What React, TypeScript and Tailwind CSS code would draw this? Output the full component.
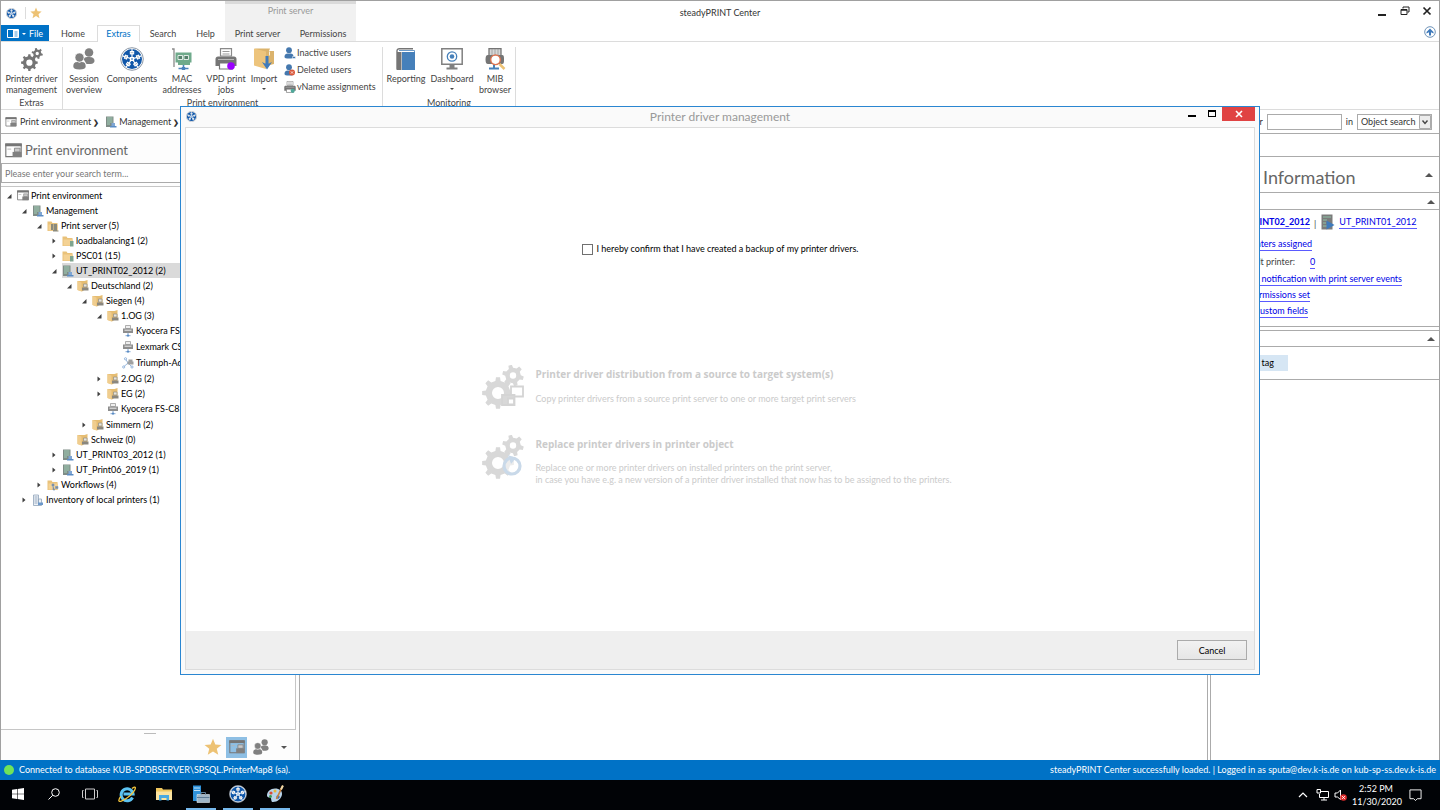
import React from 'react';
import clsx from 'clsx';

type IconProps = { className?: string };

function gearPath(cx: number, cy: number, outer: number, inner: number, hole: number, teeth: number, turn = 0) {
  const step = (Math.PI * 2) / teeth;
  const at = (r: number, a: number) => `${(cx + r * Math.cos(a)).toFixed(2)} ${(cy + r * Math.sin(a)).toFixed(2)}`;
  let d = '';
  for (let i = 0; i < teeth; i++) {
    const a = i * step + turn;
    d += `${i === 0 ? 'M' : 'L'}${at(inner, a - step * 0.27)} L${at(outer, a - step * 0.16)} L${at(outer, a + step * 0.16)} L${at(inner, a + step * 0.27)} `;
  }
  d += `Z M${cx - hole} ${cy} a${hole} ${hole} 0 1 0 ${hole * 2} 0 a${hole} ${hole} 0 1 0 ${-hole * 2} 0 Z`;
  return d;
}

const bigGear = gearPath(16, 28, 16, 12.4, 6, 8, 0);
const smallGear = gearPath(31, 10.5, 10.8, 7.8, 3.2, 6, 0.25);

function GearsIcon({ className }: IconProps) {
  return (
    <svg viewBox="0 0 42 44" className={className} fill="currentColor" fillRule="evenodd" strokeLinejoin="round">
      <path d={bigGear} />
      <path d={smallGear} />
    </svg>
  );
}

function WheelIcon({ className }: IconProps) {
  return (
    <svg viewBox="0 0 24 24" className={className}>
      <circle cx="12" cy="12" r="11.3" fill="#fff" stroke="#8d98a5" strokeWidth="1" />
      <circle cx="12" cy="12" r="10" fill="#0f56a8" />
      {[0, 72, 144, 216, 288].map((angle) => (
        <g key={angle} transform={`rotate(${angle} 12 12)`}>
          <path d="M12 12V2" stroke="#fff" strokeWidth="1.2" />
          <path d="M9.8 4h4.4v3.400H9.800z" fill="#fff" />
          <path d="M10.6 5.700h2.8" stroke="#8d98a5" strokeWidth=".7" />
        </g>
      ))}
      <path d="M9.800 10h4.400v4H9.800z" fill="#fff" />
      <path d="M11 12h2" stroke="#0f56a8" strokeWidth=".9" />
    </svg>
  );
}

function StarIcon({ className }: IconProps) {
  return (
    <svg viewBox="0 0 24 24" className={className} fill="#edc274">
      <path d="M12 1l3.1 7.6 8.2.6-6.3 5.2 2 8-7-4.4-7 4.4 2-8L.7 9.200l8.200-.6z" />
    </svg>
  );
}

function UsersIcon({ className }: IconProps) {
  return (
    <svg viewBox="0 0 22 22" className={className} fill="#808080">
      <circle cx="16" cy="4.500" r="4.300" />
      <path d="M10.500 11c1-2 3-2 5.500-2s5.500.5 5.500 4c0 1.500-1.500 3-4 3h-4z" />
      <circle cx="6.500" cy="9.500" r="4.500" stroke="#fff" strokeWidth=".6" />
      <path d="M.3 18.500c0-4 2.500-4.500 4.200-4.500l2 .7 2-.7c2 0 4.200.5 4.200 4.500 0 2-2 3-6.200 3s-6.200-1-6.200-3z" />
    </svg>
  );
}

function CardIcon({ className }: IconProps) {
  return (
    <svg viewBox="0 0 20 22" className={className}>
      <path d="M0 1h2v18" stroke="#8a8a8a" strokeWidth="1.300" fill="none" />
      <path d="M3.500 4.500h16v10H18V17H6v-2.500H3.500z" fill="#6faa8b" />
      <path d="M6 7.500h4.500v4H6zM12 7.500h4.500v4H12z" fill="#55806b" stroke="#fff" strokeWidth=".8" />
      <path d="M11.500 17v3M6.500 20.500h10" stroke="#4a82bd" strokeWidth="1.600" />
      <path d="M9.800 19h3.400v3H9.800z" fill="#4a82bd" />
    </svg>
  );
}

function PrinterIcon({ className, dot }: IconProps & { dot?: string }) {
  return (
    <svg viewBox="0 0 22 22" className={className}>
      <path d="M5.500 .7h11V8h-11z" fill="#fff" stroke="#8a8a8a" strokeWidth="1.200" />
      <path d="M7.500 3.500h7M7.500 6h7" stroke="#9a9a9a" strokeWidth="1.200" />
      <path d="M3 8.500h16c1.500 0 2.500 1 2.500 2.500v7H.5v-7c0-1.500 1-2.500 2.500-2.500z" fill="#757575" />
      <path d="M3 11.500h16" stroke="#c9c9c9" strokeWidth=".8" />
      <path d="M4.500 15h13v6h-13z" fill="#fff" stroke="#757575" strokeWidth="1.200" />
      {dot && <circle cx="16" cy="18" r="3.800" fill={dot} />}
    </svg>
  );
}

function ImportIcon({ className }: IconProps) {
  return (
    <svg viewBox="0 0 20 22" className={className}>
      <path d="M1 .5h15l-1 2.500H20V16l-8 2z" fill="#dbb36c" />
      <path d="M0 .5L12 3.500V21L0 17.500z" fill="#edc47c" />
      <path d="M15.500 3.500v4" stroke="#fff" strokeWidth=".8" />
      <path d="M13 8v9" stroke="#3f7abb" strokeWidth="3" />
      <path d="M8 14l5 7.500 5-7.500-3 1.500h-4z" fill="#3f7abb" />
    </svg>
  );
}

function BookIcon({ className }: IconProps) {
  return (
    <svg viewBox="0 0 20 22" className={className}>
      <path d="M5 22H2.500C1.500 22 1 21.500 1 20.500V3C1 1.500 2 .7 3.500.7H17" fill="none" stroke="#757575" strokeWidth="1.400" />
      <path d="M1 4h4.500v18H2.500C1.500 22 1 21.500 1 20.500z" fill="#757575" />
      <path d="M6 4h13v18H6z" fill="#4680ba" />
      <path d="M3 2.500h15.500V22" fill="none" stroke="#4680ba" strokeWidth=".8" />
    </svg>
  );
}

function MonitorIcon({ className }: IconProps) {
  return (
    <svg viewBox="0 0 22 22" className={className}>
      <path d="M.8.800h20.400v15.400H.8z" fill="#fff" stroke="#808080" strokeWidth="1.500" />
      <circle cx="11" cy="8.500" r="4.700" fill="none" stroke="#4680ba" strokeWidth="1.300" />
      <circle cx="11" cy="8.500" r="2.300" fill="#4680ba" />
      <path d="M8.500 17h5v2.500h3V21.500h-11v-2h3z" fill="#808080" />
    </svg>
  );
}

function BrowserIcon({ className }: IconProps) {
  return (
    <svg viewBox="0 0 22 22" className={className}>
      <path d="M5 .7h12V8H5z" fill="#d6d6d6" stroke="#757575" strokeWidth="1.300" />
      <path d="M8 1v6M11 1v6M14 1v6" stroke="#999" strokeWidth=".8" />
      <path d="M4 7h14c2 0 2 2 2 4.500S20 16 18 16H4c-2 0-2.500-2-2.500-4.500S2 7 4 7z" fill="#757575" />
      <path d="M10 16v4M5 20.500h10" stroke="#4680ba" strokeWidth="2" />
      <path d="M15.500 16l5 5" stroke="#edc274" strokeWidth="2.500" />
      <circle cx="11.500" cy="11.800" r="4.800" fill="#fff" stroke="#de7350" strokeWidth="1.400" />
    </svg>
  );
}

function UserIcon({ className, deleted }: IconProps & { deleted?: boolean }) {
  return (
    <svg viewBox="0 0 12 12" className={className}>
      <circle cx="5" cy="3.200" r="2.900" fill="#4578ae" />
      <path d="M.5 10c0-3 2-3.500 3.500-3.500h2c2 0 3.500.5 3.500 3.500 0 1-1.500 1.500-4.500 1.500S.5 11 .5 10z" fill="#4578ae" />
      {deleted ? (
        <>
          <circle cx="8" cy="8.500" r="3" fill="#d9573a" />
          <path d="M6.800 7.300l2.400 2.400M9.200 7.300L6.800 9.700" stroke="#fff" strokeWidth=".7" />
        </>
      ) : (
        <path d="M8.500 9.500h3v2h-3z" fill="#4578ae" stroke="#fff" strokeWidth=".5" />
      )}
    </svg>
  );
}

function EnvironmentIcon({ className }: IconProps) {
  return (
    <svg viewBox="0 0 18 16" className={className}>
      <path d="M.8 1h16.400v13.500H.8z" fill="none" stroke="#757575" strokeWidth="1.200" />
      <path d="M.2.500h17.600V3.500H.2z" fill="#757575" />
      <path d="M2.500 6.500h4" stroke="#b5b5b5" strokeWidth="1" />
      <path d="M10 5.500h6v4h-6z" fill="#c8c8c8" stroke="#808080" strokeWidth=".9" />
      <path d="M8 9.500h9.500v5.500H8z" fill="#808080" />
    </svg>
  );
}

function ServerIcon({ className }: IconProps) {
  return (
    <svg viewBox="0 0 12 12" className={className}>
      <path d="M1 .500h7.500v10.500H1z" fill="#7f8c86" />
      <path d="M2 2h5.500M2 4h5.500M2 6h5.500M2 8h3" stroke="#a2d0b8" strokeWidth="1" />
      <path d="M6.500 7h3.500v3H6.500z" fill="#7fa6d4" />
      <path d="M5 10h6.500v1.500H5z" fill="#5b8cc4" />
    </svg>
  );
}

function FolderIcon({ className, mark }: IconProps & { mark: 'server' | 'stack' | 'flow' }) {
  return (
    <svg viewBox="0 0 12 12" className={className}>
      <path d="M.5 1.500h4l1 1.500h5v8H.5z" fill="#e9c27a" />
      <path d="M1.500 4.500h9.500v6h-9.500z" fill="#f4d294" />
      {mark === 'server' && <path d="M8 6h3.500v5.500H8z" fill="#7fa58f" />}
      {mark === 'stack' && <path d="M4 4h2.500v6H4zM7 4h3v6.500h1.500v1H6V10h1z" fill="#8a8a7c" />}
      {mark === 'flow' && <path d="M5 5h2v2H5zM8.500 7.500h2.500v2H8.500zM6 7v4h2" fill="#8a8a8a" stroke="#6b98cb" strokeWidth=".6" />}
    </svg>
  );
}

function BoxIcon({ className }: IconProps) {
  return (
    <svg viewBox="0 0 12 12" className={className}>
      <path d="M.5 1h7L10.500 0v8L5 11.500.5 10z" fill="#e6bd72" />
      <path d="M.5 1l4 1.500v9L.5 10z" fill="#f0cd8e" />
      <path d="M6.500 4h3.500v3H6.500z" fill="#e8e4da" stroke="#9a9488" strokeWidth=".8" />
      <path d="M5 7.500h6.500v3H5z" fill="#8a877f" />
    </svg>
  );
}

function NetPrinterIcon({ className, pool }: IconProps & { pool?: boolean }) {
  if (pool) {
    return (
      <svg viewBox="0 0 12 12" className={className}>
        <path d="M3.500 2L6 6M6 6l-4.500 4M6 6l4 4" stroke="#7fa6d4" strokeWidth=".8" />
        <circle cx="3.500" cy="1.800" r="1.100" fill="#fff" stroke="#7fa6d4" strokeWidth=".8" />
        <circle cx="1.700" cy="10" r="1.100" fill="#fff" stroke="#7fa6d4" strokeWidth=".8" />
        <circle cx="10" cy="10" r="1.100" fill="#fff" stroke="#7fa6d4" strokeWidth=".8" />
        <path d="M6.500 2.500h4v2h-4zM5.500 4.500h6v3h-6z" fill="#a0a0a0" />
      </svg>
    );
  }
  return (
    <svg viewBox="0 0 12 12" className={className}>
      <path d="M3.500.5h5v3h-5z" fill="#eee" stroke="#9a9a9a" strokeWidth=".8" />
      <path d="M1 3.500h10V8H1z" fill="#8d8d8d" />
      <path d="M2.500 5.200h7" stroke="#e6e6e6" strokeWidth="1.100" />
      <path d="M6 8v2M3.500 10.700h5" stroke="#7fa6d4" strokeWidth="1" />
      <path d="M5 9.700h2v1.800H5z" fill="#5b8cc4" />
    </svg>
  );
}

function BuildingIcon({ className }: IconProps) {
  return (
    <svg viewBox="0 0 12 12" className={className}>
      <path d="M1.500 11.500V1h5v10.500zM6.500 5h3v6.500h-3z" fill="#eef2f7" stroke="#8fa3ba" strokeWidth=".8" />
      <path d="M2.500 3h3M2.500 5h3M2.500 7h3M2.500 9h3" stroke="#8fa3ba" strokeWidth=".9" />
      <path d="M6 8.500h5v2.500H6z" fill="#6b98cb" />
    </svg>
  );
}

const treeIcons = {
  environment: <EnvironmentIcon className="w-3 h-[11px]" />,
  server: <ServerIcon className="size-3" />,
  folderStack: <FolderIcon className="size-3" mark="stack" />,
  folderServer: <FolderIcon className="size-3" mark="server" />,
  folderFlow: <FolderIcon className="size-3" mark="flow" />,
  box: <BoxIcon className="size-3" />,
  printer: <NetPrinterIcon className="size-3" />,
  pool: <NetPrinterIcon className="size-3" pool />,
  building: <BuildingIcon className="size-3" />,
};

type TreeNode = {
  label: string;
  icon: keyof typeof treeIcons;
  children?: TreeNode[];
  collapsed?: boolean;
  selected?: boolean;
};

const tree: TreeNode[] = [
  {
    label: 'Print environment',
    icon: 'environment',
    children: [
      {
        label: 'Management',
        icon: 'server',
        children: [
          {
            label: 'Print server (5)',
            icon: 'folderStack',
            children: [
              { label: 'loadbalancing1 (2)', icon: 'folderServer', collapsed: true },
              { label: 'PSC01 (15)', icon: 'folderServer', collapsed: true },
              {
                label: 'UT_PRINT02_2012 (2)',
                icon: 'server',
                selected: true,
                children: [
                  {
                    label: 'Deutschland (2)',
                    icon: 'box',
                    children: [
                      {
                        label: 'Siegen (4)',
                        icon: 'box',
                        children: [
                          {
                            label: '1.OG (3)',
                            icon: 'box',
                            children: [
                              { label: 'Kyocera FS-C8525', icon: 'printer' },
                              { label: 'Lexmark CS510', icon: 'printer' },
                              { label: 'Triumph-Adler', icon: 'pool' },
                            ],
                          },
                          { label: '2.OG (2)', icon: 'box', collapsed: true },
                          { label: 'EG (2)', icon: 'box', collapsed: true },
                          { label: 'Kyocera FS-C8525', icon: 'printer' },
                        ],
                      },
                      { label: 'Simmern (2)', icon: 'box', collapsed: true },
                    ],
                  },
                  { label: 'Schweiz (0)', icon: 'box' },
                ],
              },
              { label: 'UT_PRINT03_2012 (1)', icon: 'server', collapsed: true },
              { label: 'UT_Print06_2019 (1)', icon: 'server', collapsed: true },
            ],
          },
          { label: 'Workflows (4)', icon: 'folderFlow', collapsed: true },
        ],
      },
      { label: 'Inventory of local printers (1)', icon: 'building', collapsed: true },
    ],
  },
];

function TreeItem({ node }: { node: TreeNode }) {
  const isPrinter = node.icon === 'printer' || node.icon === 'pool';
  return (
    <li>
      <div className={clsx('flex items-center gap-1', isPrinter ? 'h-4' : 'h-[15px]')}>
        <span className="w-2 shrink-0">
          {node.collapsed && (
            <svg viewBox="0 0 8 8" className="size-2"><path d="M2.500 1.500l3 2.500-3 2.500z" fill="#404040" /></svg>
          )}
          {node.children && (
            <svg viewBox="0 0 8 8" className="size-2"><path d="M6.500 2v4.500H2z" fill="#404040" /></svg>
          )}
        </span>
        <span className={clsx('flex flex-1 items-center gap-[2px] self-stretch whitespace-nowrap', node.selected && 'bg-[#dadada]')}>
          {treeIcons[node.icon]}
          <span>{node.label}</span>
        </span>
      </div>
      {node.children && (
        <ul className="pl-[15px]">
          {node.children.map((child) => (
            <TreeItem key={child.label} node={child} />
          ))}
        </ul>
      )}
    </li>
  );
}

function RibbonButton({ icon, label, width, menu }: { icon: React.ReactNode; label: string; width: string; menu?: boolean }) {
  return (
    <button className={clsx('flex flex-col items-center', width)}>
      <span className="flex h-6 items-center justify-center">{icon}</span>
      <span className="mt-[2px] whitespace-pre text-center leading-[11px]">{label}</span>
      {menu && <span className="mt-1 border-x-2 border-t-2 border-x-transparent border-t-[#444]" />}
    </button>
  );
}

function RibbonGroup({ title, children }: { title: string; children: React.ReactNode }) {
  return (
    <section className="flex flex-col border-r border-[#dcdcdc]">
      <div className="flex h-[51px]">{children}</div>
      <h2 className="text-center leading-3">{title}</h2>
    </section>
  );
}

function TitleBar() {
  return (
    <header className="grid grid-cols-[1fr_auto_1fr] border-b border-[#dcdcdc]">
      <div>
        <div className="flex h-6 items-center">
          <WheelIcon className="ml-[5px] size-[11px]" />
          <span className="ml-2 h-3 border-l border-[#dcdcdc]" />
          <StarIcon className="ml-1 size-3" />
        </div>
        <nav className="flex h-4 text-[#444]">
          <button className="flex w-12 items-center justify-center gap-[3px] bg-[#0072c6] pt-px text-white">
            <svg viewBox="0 0 12 9" className="h-[9px] w-3">
              <path d="M.5.500h11v8H.5z" fill="none" stroke="#fff" />
              <path d="M6 .5h5.500v8H6z" fill="#fff" />
              <path d="M7.500 3h3M7.500 5h3M7.500 7h3" stroke="#0072c6" strokeWidth=".7" />
            </svg>
            <span className="border-x-2 border-t-2 border-x-transparent border-t-white" />
            File
          </button>
          <button className="w-12 pt-px">Home</button>
          <button className="-mb-px w-[43px] border border-b-0 border-[#dcdcdc] bg-white text-[#0072c6]">Extras</button>
          <button className="w-[46px] pt-px">Search</button>
          <button className="w-[39px] pt-px">Help</button>
        </nav>
      </div>
      <h1 className="self-start pt-[6px] text-[#333]">steadyPRINT Center</h1>
      <div className="flex flex-col items-end gap-[5px] pr-[3px]">
        <div className="flex h-5 items-center gap-3 text-black">
          <button aria-label="Minimize" className="flex size-[10px] items-end">
            <span className="h-[2px] w-2 bg-[#222]" />
          </button>
          <button aria-label="Restore">
            <svg viewBox="0 0 10 10" className="size-[10px]" fill="none" stroke="#222">
              <path d="M3 2.500V1h6v5H7.500" />
              <path d="M1 3.500h6v5H1z" />
              <path d="M1 4h6" strokeWidth="1.500" />
            </svg>
          </button>
          <button aria-label="Close" className="mr-1">
            <svg viewBox="0 0 10 10" className="size-[10px]" stroke="#222" strokeWidth="1.700">
              <path d="M1.500 1.500l7 7M8.500 1.500l-7 7" />
            </svg>
          </button>
        </div>
        <button aria-label="Collapse ribbon">
          <svg viewBox="0 0 12 12" className="size-3">
            <circle cx="6" cy="6" r="5.300" fill="#fff" stroke="#6e93b8" />
            <path d="M6 2.500L9.500 6v1.500L7 6.200V9.500H5V6.200L2.500 7.500V6z" fill="#3f7abb" />
          </svg>
        </button>
      </div>
    </header>
  );
}

function ContextTabs() {
  return (
    <div className="absolute left-[225px] top-px flex h-10 w-[131px] flex-col border-t-[3px] border-[#dadada] bg-[#f1f1f1] text-[#444]">
      <p className="text-center leading-[14px] text-[#999]">Print server</p>
      <div className="mt-auto flex h-4">
        <button className="w-[65px] pt-px">Print server</button>
        <button className="w-[66px] pt-px">Permissions</button>
      </div>
    </div>
  );
}

function Ribbon() {
  return (
    <div className="flex h-[68px] border-b border-[#dcdcdc] pt-[5px] text-[#444]">
      <RibbonGroup title="Extras">
        <RibbonButton width="w-[61px]" icon={<GearsIcon className="h-[23px] w-[22px] text-[#757575]" />} label={'Printer driver\nmanagement'} />
      </RibbonGroup>
      <RibbonGroup title="Print environment">
        <RibbonButton width="w-[42px]" icon={<UsersIcon className="size-[22px]" />} label={'Session\noverview'} />
        <RibbonButton width="w-[54px]" icon={<WheelIcon className="size-6" />} label="Components" />
        <RibbonButton width="w-[46px]" icon={<CardIcon className="h-[22px] w-5" />} label={'MAC\naddresses'} />
        <RibbonButton width="w-[42px]" icon={<PrinterIcon className="size-[22px]" dot="#9a00ff" />} label={'VPD print\njobs'} />
        <RibbonButton width="w-[34px]" icon={<ImportIcon className="h-[22px] w-5" />} label="Import" menu />
        <div className="flex w-[101px] flex-col gap-[5px] whitespace-nowrap pl-[3px]">
          <button className="flex h-3 items-center gap-px"><UserIcon className="size-3" />Inactive users</button>
          <button className="flex h-3 items-center gap-px"><UserIcon className="size-3" deleted />Deleted users</button>
          <button className="flex h-3 items-center gap-px"><PrinterIcon className="size-3" dot="#4fa89a" />vName assignments</button>
        </div>
      </RibbonGroup>
      <RibbonGroup title="Monitoring">
        <RibbonButton width="w-[46px]" icon={<BookIcon className="h-[22px] w-5" />} label="Reporting" />
        <RibbonButton width="w-[46px]" icon={<MonitorIcon className="size-[22px]" />} label="Dashboard" menu />
        <RibbonButton width="w-10" icon={<BrowserIcon className="size-[22px]" />} label={'MIB\nbrowser'} />
      </RibbonGroup>
    </div>
  );
}

function LocationBar() {
  return (
    <div className="flex h-6 items-center justify-between border-b border-[#ababab] pl-1 pr-[7px] text-[#333]">
      <nav className="flex items-center">
        <EnvironmentIcon className="mr-[3px] h-[10px] w-3" />
        <a href="#environment">Print environment</a>
        <span className="ml-[2px] mr-[6px] text-[7px] font-bold">❯</span>
        <ServerIcon className="mr-[2px] size-3" />
        <a href="#management">Management</a>
        <span className="ml-[2px] text-[7px] font-bold">❯</span>
      </nav>
      <div className="flex items-center gap-1">
        <label htmlFor="object-term">Search for</label>
        <input id="object-term" className="h-4 w-[75px] border border-[#ababab] bg-white px-1" />
        <label htmlFor="object-scope">in</label>
        <div className="relative">
          <select id="object-scope" className="h-4 w-[75px] appearance-none border border-[#ababab] bg-white pl-[3px]">
            <option>Object search</option>
          </select>
          <svg viewBox="0 0 12 14" className="pointer-events-none absolute right-px top-px h-[14px] w-3">
            <path d="M.5.500h11v13H.5z" fill="#ececec" stroke="#ababab" />
            <path d="M3.500 5.500L6 8.500l2.500-3" fill="none" stroke="#444" strokeWidth="1.400" />
          </svg>
        </div>
      </div>
    </div>
  );
}

function Sidebar() {
  return (
    <aside className="flex w-[299px] flex-col border-r border-[#ababab] bg-[#fdfdfd]">
      <h2 className="flex h-[29px] items-center gap-[3px] pl-1 pt-[3px] text-[13px] text-[#666]">
        <EnvironmentIcon className="h-[15px] w-[17px]" />
        Print environment
      </h2>
      <input
        aria-label="Search"
        placeholder="Please enter your search term..."
        className="mr-[3px] h-5 border border-[#ababab] bg-white pl-[3px] placeholder:text-[#777]"
      />
      <div className="mr-[3px] mt-[3px] flex-1 overflow-hidden border border-l-0 border-[#c6c6c6] bg-white pt-px text-black">
        <ul className="pl-1">
          {tree.map((node) => (
            <TreeItem key={node.label} node={node} />
          ))}
        </ul>
      </div>
      <div className="mx-auto mt-[3px] w-3 border-t border-[#bbb]" />
      <div className="flex h-[26px] items-center justify-end gap-1 pr-3">
        <button aria-label="Favourites"><StarIcon className="size-[18px]" /></button>
        <button aria-label="Print environment" className="flex size-[21px] items-center justify-center bg-[#8ebfe4]">
          <EnvironmentIcon className="h-[14px] w-4" />
        </button>
        <button aria-label="Users" className="ml-[2px]"><UsersIcon className="size-4" /></button>
        <button aria-label="More" className="ml-2 border-x-[3px] border-t-[3px] border-x-transparent border-t-[#555]" />
      </div>
    </aside>
  );
}

function Caret() {
  return <span className="border-x-4 border-b-4 border-x-transparent border-b-[#555]" />;
}

const linkClass = 'border-b border-[#5a5aff] leading-3 text-[#0000e6]';

function InfoPanel() {
  return (
    <aside className="flex w-[232px] flex-col border-l-4 border-double border-[#ababab] pt-[22px] text-[#444]">
      <div className="flex h-[37px] items-center justify-between border-y border-[#ababab] pl-[52px] pr-[6px]">
        <h2 className="pt-1 text-[18px] text-[#666]">Information</h2>
        <Caret />
      </div>
      <div className="mt-px flex h-4 items-center justify-end border-b border-[#ababab] pr-1"><Caret /></div>
      <div className="h-[117px] whitespace-nowrap border-b border-[#ababab] pl-[19px] pt-[3px]">
        <div className="flex h-[18px] items-center gap-1">
          <a href="#print02" className={clsx(linkClass, 'w-[80px] text-right font-bold')}>UT_PRINT02_2012</a>
          <span className="pt-1">|</span>
          <svg viewBox="0 0 14 16" className="ml-px h-4 w-[14px]">
            <path d="M.5.500h11v15H.5z" fill="#7b7b7b" />
            <path d="M2 3h8M2 6h4M2 9h3M2 12h4" stroke="#8fc4a8" />
            <path d="M5.500 6.500L13.500 11l-8 4.500z" fill="#3f7abb" />
          </svg>
          <a href="#print01" className={linkClass}>UT_PRINT01_2012</a>
        </div>
        <div className="mt-1 flex h-[18px] items-center">
          <a href="#assigned" className={clsx(linkClass, 'w-[82px] text-right')}>22 printers assigned</a>
        </div>
        <div className="flex h-[18px] items-center">
          <span className="w-[65px] text-right">Default printer:</span>
          <a href="#default" className={clsx(linkClass, 'ml-[15px]')}>0</a>
        </div>
        <div className="flex h-4 items-center">
          <a href="#notification" className={clsx(linkClass, 'w-[172px] text-right')}>Email notification with print server events</a>
        </div>
        <div className="flex h-4 items-center">
          <a href="#permissions" className={clsx(linkClass, 'w-[80px] text-right')}>No permissions set</a>
        </div>
        <div className="flex h-4 items-center">
          <a href="#fields" className={clsx(linkClass, 'w-[78px] text-right')}>No custom fields</a>
        </div>
      </div>
      <div className="mt-[3px] flex h-[17px] items-center justify-end border-y border-[#ababab] pr-1"><Caret /></div>
      <div className="flex h-[33px] items-center border-b border-[#ababab] pl-[19px]">
        <span className="w-[58px] bg-[#d6e6f4] pr-[14px] text-right leading-4 text-black">Add tag</span>
      </div>
    </aside>
  );
}

function DriverDialog() {
  return (
    <div
      role="dialog"
      aria-labelledby="dialog-title"
      className="absolute inset-x-[12.5%] bottom-[135px] top-[106px] flex flex-col border border-[#2a86d1] bg-[#fafafa] px-1 pb-1 text-black"
    >
      <header className="grid h-5 grid-cols-[1fr_auto_1fr]">
        <WheelIcon className="ml-px mt-1 size-[11px]" />
        <h2 id="dialog-title" className="text-[12px] leading-5 text-[#999]">Printer driver management</h2>
        <div className="flex items-start justify-end">
          <button aria-label="Minimize dialog" className="mr-3 mt-2 h-[2px] w-2 bg-black" />
          <button aria-label="Maximize dialog" className="mr-[6px] mt-[3px] h-[7px] w-2 border border-t-2 border-black" />
          <button aria-label="Close dialog" className="flex h-[14px] w-[33px] items-center justify-center bg-[#e04343]">
            <svg viewBox="0 0 8 8" className="size-2" stroke="#fff" strokeWidth="1.600"><path d="M1 1l6 6M7 1L1 7" /></svg>
          </button>
        </div>
      </header>
      <main className="flex flex-1 flex-col items-center border border-b-0 border-[#dcdcdc] bg-white">
        <label className="mt-[115px] flex items-center gap-1">
          <input type="checkbox" className="size-[11px] appearance-none border border-[#707070] bg-white checked:bg-[#0072c6]" />
          I hereby confirm that I have created a backup of my printer drivers.
        </label>
        <div className="mt-[110px] flex flex-col gap-[26px] pr-[6px] text-[#cbcbcb]">
          <button disabled className="flex h-11 gap-[11px] text-left">
            <span className="relative">
              <GearsIcon className="h-11 w-[42px] text-[#d8d8d8]" />
              <svg viewBox="0 0 24 21" className="absolute bottom-[3px] right-0 h-[21px] w-6" fill="#fff" stroke="#d4d4d4" strokeWidth="1.800">
                <path d="M11 1.500h12v10H11z" />
                <path d="M2 10h12.500v10H2z" fill="#d8d8d8" />
                <path d="M8 13.500h6v6H8z" />
              </svg>
            </span>
            <span>
              <strong className="block pt-[3px] font-['Open_Sans',sans-serif] text-[10px] leading-3">Printer driver distribution from a source to target system(s)</strong>
              <span className="mt-[13px] block leading-3">Copy printer drivers from a source print server to one or more target print servers</span>
            </span>
          </button>
          <button disabled className="flex h-11 gap-[11px] text-left">
            <span className="relative">
              <GearsIcon className="h-11 w-[42px] text-[#d8d8d8]" />
              <svg viewBox="0 0 20 22" className="absolute bottom-[3px] right-[2px] h-[22px] w-5">
                <circle cx="10" cy="12" r="8" fill="#fff" fillOpacity=".5" stroke="#c9d9e9" strokeWidth="3.200" />
                <path d="M6 1l8 3-5 6z" fill="#c9d9e9" />
              </svg>
            </span>
            <span>
              <strong className="block pt-[3px] font-['Open_Sans',sans-serif] text-[10px] leading-3">Replace printer drivers in printer object</strong>
              <span className="mt-3 block leading-3">
                Replace one or more printer drivers on installed printers on the print server,
                <br />
                in case you have e.g. a new version of a printer driver installed that now has to be assigned to the printers.
              </span>
            </span>
          </button>
        </div>
      </main>
      <footer className="flex h-[39px] items-center justify-end border border-t-0 border-[#dcdcdc] bg-[#efefef] pr-[7px]">
        <button className="h-5 w-[70px] border border-[#ababab] bg-linear-to-b from-[#f2f2f2] to-[#e6e6e6] pt-px">Cancel</button>
      </footer>
    </div>
  );
}

function TaskButton({ label, active, children }: { label: string; active?: boolean; children: React.ReactNode }) {
  return (
    <button aria-label={label} className="flex w-9 flex-col items-center">
      <span className="flex flex-1 items-center">{children}</span>
      <span className={clsx('h-[2px] w-[30px]', active && 'bg-[#76b9ed]')} />
    </button>
  );
}

function Taskbar() {
  return (
    <footer className="flex h-[30px] justify-between bg-[#010306] text-white">
      <div className="flex gap-px">
        <div className="flex">
          <TaskButton label="Start">
            <svg viewBox="0 0 12 12" className="size-3" fill="#fff"><path d="M0 1.700L5 1v4.700H0zM5.600.900L12 0v5.700H5.600zM0 6.300h5V11l-5-.7zM5.600 6.300H12V12l-6.400-.9z" /></svg>
          </TaskButton>
          <TaskButton label="Search">
            <svg viewBox="0 0 12 12" className="size-3" fill="none" stroke="#fff"><circle cx="7.500" cy="4.500" r="3.800" /><path d="M4.700 7.300L.5 11.500" /></svg>
          </TaskButton>
          <TaskButton label="Task view">
            <svg viewBox="0 0 16 12" className="h-3 w-4" fill="none" stroke="#ccc"><path d="M3.500 1h9v10h-9zM1.500 2.500h-1v7h1M14.500 2.500h1v7h-1" /></svg>
          </TaskButton>
        </div>
        <TaskButton label="Internet Explorer">
          <svg viewBox="0 0 18 18" className="size-[18px]" fill="none">
            <path d="M14.500 12.500a6 6 0 1 1 .6-3.500H5.500" stroke="#5cc3f2" strokeWidth="3" />
            <path d="M14 3.500c2-1.500 3-1.800 3.300-1 .6 2-3.300 7-8 10.300S1 17.500.8 15.500c0-1 .7-2.500 2-4" stroke="#f3c53c" strokeWidth="1.300" />
          </svg>
        </TaskButton>
        <TaskButton label="File Explorer">
          <svg viewBox="0 0 16 14" className="h-[14px] w-4">
            <path d="M0 1h6l1 1.500h9V13H0z" fill="#f0c75e" />
            <path d="M0 4.500h16V13H0z" fill="#fbe3a0" />
            <path d="M3 8h10v5.500h-2.500V11h-5v2.500H3z" fill="#4aa9e0" />
          </svg>
        </TaskButton>
        <TaskButton label="Server Manager" active>
          <svg viewBox="0 0 18 18" className="size-[18px]">
            <path d="M1 .500h8V16H1z" fill="#2f93dc" />
            <path d="M2 3h6M2 5.500h6" stroke="#bfe0f7" />
            <path d="M5 9.500h12.500v8H5z" fill="#9fb6c8" stroke="#e4ecf2" strokeWidth=".6" />
            <path d="M5 12.500h12.500M9 9.500v-2h4.500v2" stroke="#5d7c96" fill="none" />
          </svg>
        </TaskButton>
        <TaskButton label="steadyPRINT Center" active><WheelIcon className="size-[18px]" /></TaskButton>
        <TaskButton label="Paint" active>
          <svg viewBox="0 0 18 18" className="size-[18px]">
            <path d="M9 3.500c4.500 0 7.500 2.500 7 6-.5 4-4.500 7.500-9 7.500-2 0-1.500-2-2-3.500S1 13 1 10.500c0-4 3.500-7 8-7z" fill="#b7d3ea" />
            <circle cx="5" cy="8" r="1.600" fill="#d84b3a" />
            <circle cx="9" cy="6" r="1.500" fill="#e8b53a" />
            <circle cx="4.500" cy="11.500" r="1.400" fill="#3a9a56" />
            <circle cx="12" cy="12" r="1.700" fill="#3566b8" />
            <path d="M16.500 1l-6 13" stroke="#c8803c" strokeWidth="1.700" />
            <path d="M17 .5l-2 4" stroke="#f0d9a8" strokeWidth="2" />
          </svg>
        </TaskButton>
      </div>
      <div className="flex items-center">
        <svg viewBox="0 0 10 6" className="h-[6px] w-[10px]" fill="none" stroke="#fff" strokeWidth="1.200"><path d="M1 5l4-4 4 4" /></svg>
        <svg viewBox="0 0 14 12" className="ml-2 h-3 w-[14px]" fill="none" stroke="#fff"><path d="M4 2.500h8.500v6H3.500V5M8 8.500v2.500M5 11h6M1 .5h3.500v3.500H1z" /></svg>
        <svg viewBox="0 0 14 12" className="ml-1 h-3 w-[14px]">
          <path d="M1 4h2.500L6.500 1v9.500L3.500 8H1z" fill="none" stroke="#fff" />
          <circle cx="9.500" cy="8.500" r="3.300" fill="#dd2c2c" />
          <path d="M8.200 7.200l2.600 2.600M10.800 7.200L8.200 9.800" stroke="#fff" />
        </svg>
        <div className="ml-1 w-12 text-center leading-[13px]">
          <div>2:52 PM</div>
          <div>11/30/2020</div>
        </div>
        <svg viewBox="0 0 14 14" className="ml-[9px] mr-[18px] h-[14px] w-[13px]" fill="none" stroke="#fff"><path d="M1 1.500h12v9.500H9L7 13l-2-2H1z" /></svg>
      </div>
    </footer>
  );
}

export default function App() {
  return (
    <div className="relative flex min-h-screen flex-col bg-white font-['Lato',sans-serif] text-[9px] leading-3">
      <div className="flex flex-1 flex-col border-x border-t border-[#a0a0a0]">
        <TitleBar />
        <Ribbon />
        <LocationBar />
        <div className="flex flex-1">
          <Sidebar />
          <div className="flex-1" />
          <InfoPanel />
        </div>
      </div>
      <div className="flex h-5 items-center justify-between bg-[#0072c6] px-1 text-white">
        <p className="flex items-center gap-[5px]"><span className="size-[10px] rounded-full bg-[#6fe35b]" />Connected to database KUB-SPDBSERVER\SPSQL.PrinterMap8 (sa).</p>
        <p>steadyPRINT Center successfully loaded. | Logged in as sputa@dev.k-is.de on kub-sp-ss.dev.k-is.de</p>
      </div>
      <Taskbar />
      <ContextTabs />
      <DriverDialog />
    </div>
  );
}
